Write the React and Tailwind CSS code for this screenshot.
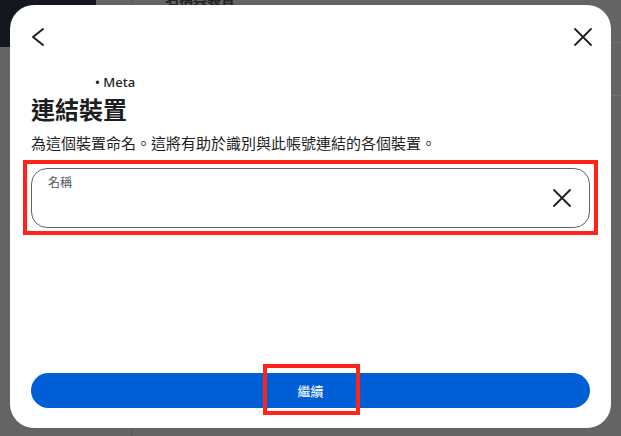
import React from "react";

export default function App() {
  const cjk = { fontFamily: '"Noto Sans", "Noto Sans CJK TC", sans-serif' };
  return (
    <div className="relative w-[621px] h-[436px] overflow-hidden bg-[#646464]" style={cjk}>
      {/* dimmed page behind the dialog */}
      <div className="absolute left-0 top-0 w-[96px] h-[47px] bg-[#14181e] rounded-br-[6px]" />
      <div className="absolute left-[131px] top-0 h-full w-px bg-[#585858]" />
      <div className="absolute left-[611px] top-[42px] w-[10px] h-px bg-[#707070]" />
      <div className="absolute left-[611px] top-[95px] w-[10px] h-px bg-[#707070]" />
      <div className="absolute left-[165px] top-[-12px] text-[14px] font-bold text-[#222]">名稱與裝置</div>

      {/* dialog */}
      <div className="absolute left-[10px] top-[5px] w-[601px] h-[423px] bg-white rounded-[24px] flex flex-col">
        <div className="flex items-center justify-between px-[16px] pt-[20px] h-[44px]">
          <svg width="24" height="24" viewBox="0 0 24 24" fill="none" stroke="#1c1e21" strokeWidth="2" strokeLinecap="round" strokeLinejoin="round">
            <path d="M17 4 L7 12 L17 20" />
          </svg>
          <svg width="24" height="24" viewBox="0 0 24 24" fill="none" stroke="#1c1e21" strokeWidth="1.8" strokeLinecap="round">
            <path d="M4 4 L20 20 M20 4 L4 20" />
          </svg>
        </div>

        <div className="px-[21px] flex flex-col">
          <div className="mt-[25px] ml-[64px] text-[13px] leading-[16px] font-medium text-[#1c1e21]">• Meta</div>
          <h1 className="mt-[5px] text-[24px] leading-[30px] font-bold text-[#1c1e21]">連結裝置</h1>
          <p className="mt-[8px] text-[15px] leading-[20px] text-[#1c1e21]">為這個裝置命名。這將有助於識別與此帳號連結的各個裝置。</p>

          <div className="relative mt-[15px]">
            <div className="h-[60px] rounded-[16px] border border-[#5b6570] flex items-center justify-between pl-[16px] pr-[15px]">
              <div className="self-start pt-[6px] text-[12px] leading-[16px] text-[#4b535c]">名稱</div>
              <svg width="24" height="24" viewBox="0 0 24 24" fill="none" stroke="#1c1e21" strokeWidth="1.8" strokeLinecap="round">
                <path d="M4 4 L20 20 M20 4 L4 20" />
              </svg>
            </div>
            <div className="absolute -left-[8px] -top-[8px] -right-[8px] -bottom-[7px] border-4 border-[#ff2318] pointer-events-none" />
          </div>
        </div>

        <div className="flex-1" />

        <div className="px-[21px] pb-[20px]">
          <div className="relative">
            <button className="w-full h-[35px] rounded-full bg-[#005fd7] text-white text-[13px] leading-[16px] font-normal flex items-center justify-center">
              繼續
            </button>
            <div className="absolute left-[232px] top-[-9px] w-[97px] h-[51px] border-4 border-[#ff2318] pointer-events-none" />
          </div>
        </div>
      </div>
    </div>
  );
}
